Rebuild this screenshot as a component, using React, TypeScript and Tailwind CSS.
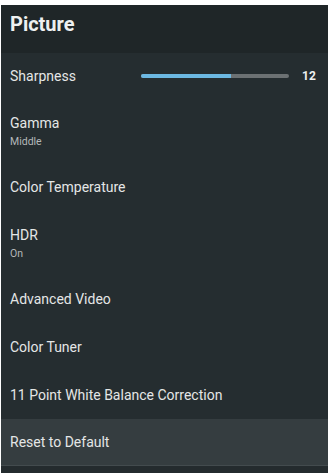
import React from 'react';

type Item = { label: string; sub?: string };

const items: Item[] = [
  { label: 'Gamma', sub: 'Middle' },
  { label: 'Color Temperature' },
  { label: 'HDR', sub: 'On' },
  { label: 'Advanced Video' },
  { label: 'Color Tuner' },
  { label: '11 Point White Balance Correction' },
];

const Row: React.FC<Item> = ({ label, sub }) =>
  sub ? (
    <div className="h-[64px] pt-[14px] px-[9px]">
      <div className="text-[14px] leading-5 text-[#e4e6e6]">{label}</div>
      <div className="mt-[2px] text-[10.5px] leading-[14px] text-[#b4b8b9]">{sub}</div>
    </div>
  ) : (
    <div className="h-[48px] flex items-center px-[9px] text-[14px] text-[#e4e6e6]">{label}</div>
  );

export default function App() {
  const value = 12;
  const pct = 61;
  return (
    <div
      className="w-[329px] h-[473px] bg-white pt-[5px] px-px overflow-hidden"
      style={{ fontFamily: 'Roboto, "Liberation Sans", sans-serif' }}
    >
      <div className="h-[468px] bg-[#252d30] flex flex-col">
        {/* header */}
        <div className="h-[48px] bg-[#1f2628] pt-[7px] px-[9px]">
          <h1 className="text-[20px] leading-[25px] font-bold text-[#eef0f0]">Picture</h1>
        </div>

        {/* sharpness slider */}
        <div className="h-[46px] flex items-center px-[9px]">
          <span className="w-[131px] text-[14px] text-[#e4e6e6]">Sharpness</span>
          <div className="w-[148px] h-[4px] bg-[#6c7173] rounded-full overflow-hidden">
            <div className="h-full bg-[#6cb8e2]" style={{ width: `${pct}%` }} />
          </div>
          <span className="ml-[13px] text-[12px] font-bold text-[#eef0f0]">{value}</span>
        </div>

        {items.map((it) => (
          <Row key={it.label} {...it} />
        ))}

        <div className="h-[46px] flex items-center px-[9px] bg-[#353d40] text-[14px] text-[#e4e6e6]">
          Reset to Default
        </div>
        <div className="h-px bg-[#434b4e]" />
        <div className="flex-1 bg-[#242b2e]" />
      </div>
    </div>
  );
}
